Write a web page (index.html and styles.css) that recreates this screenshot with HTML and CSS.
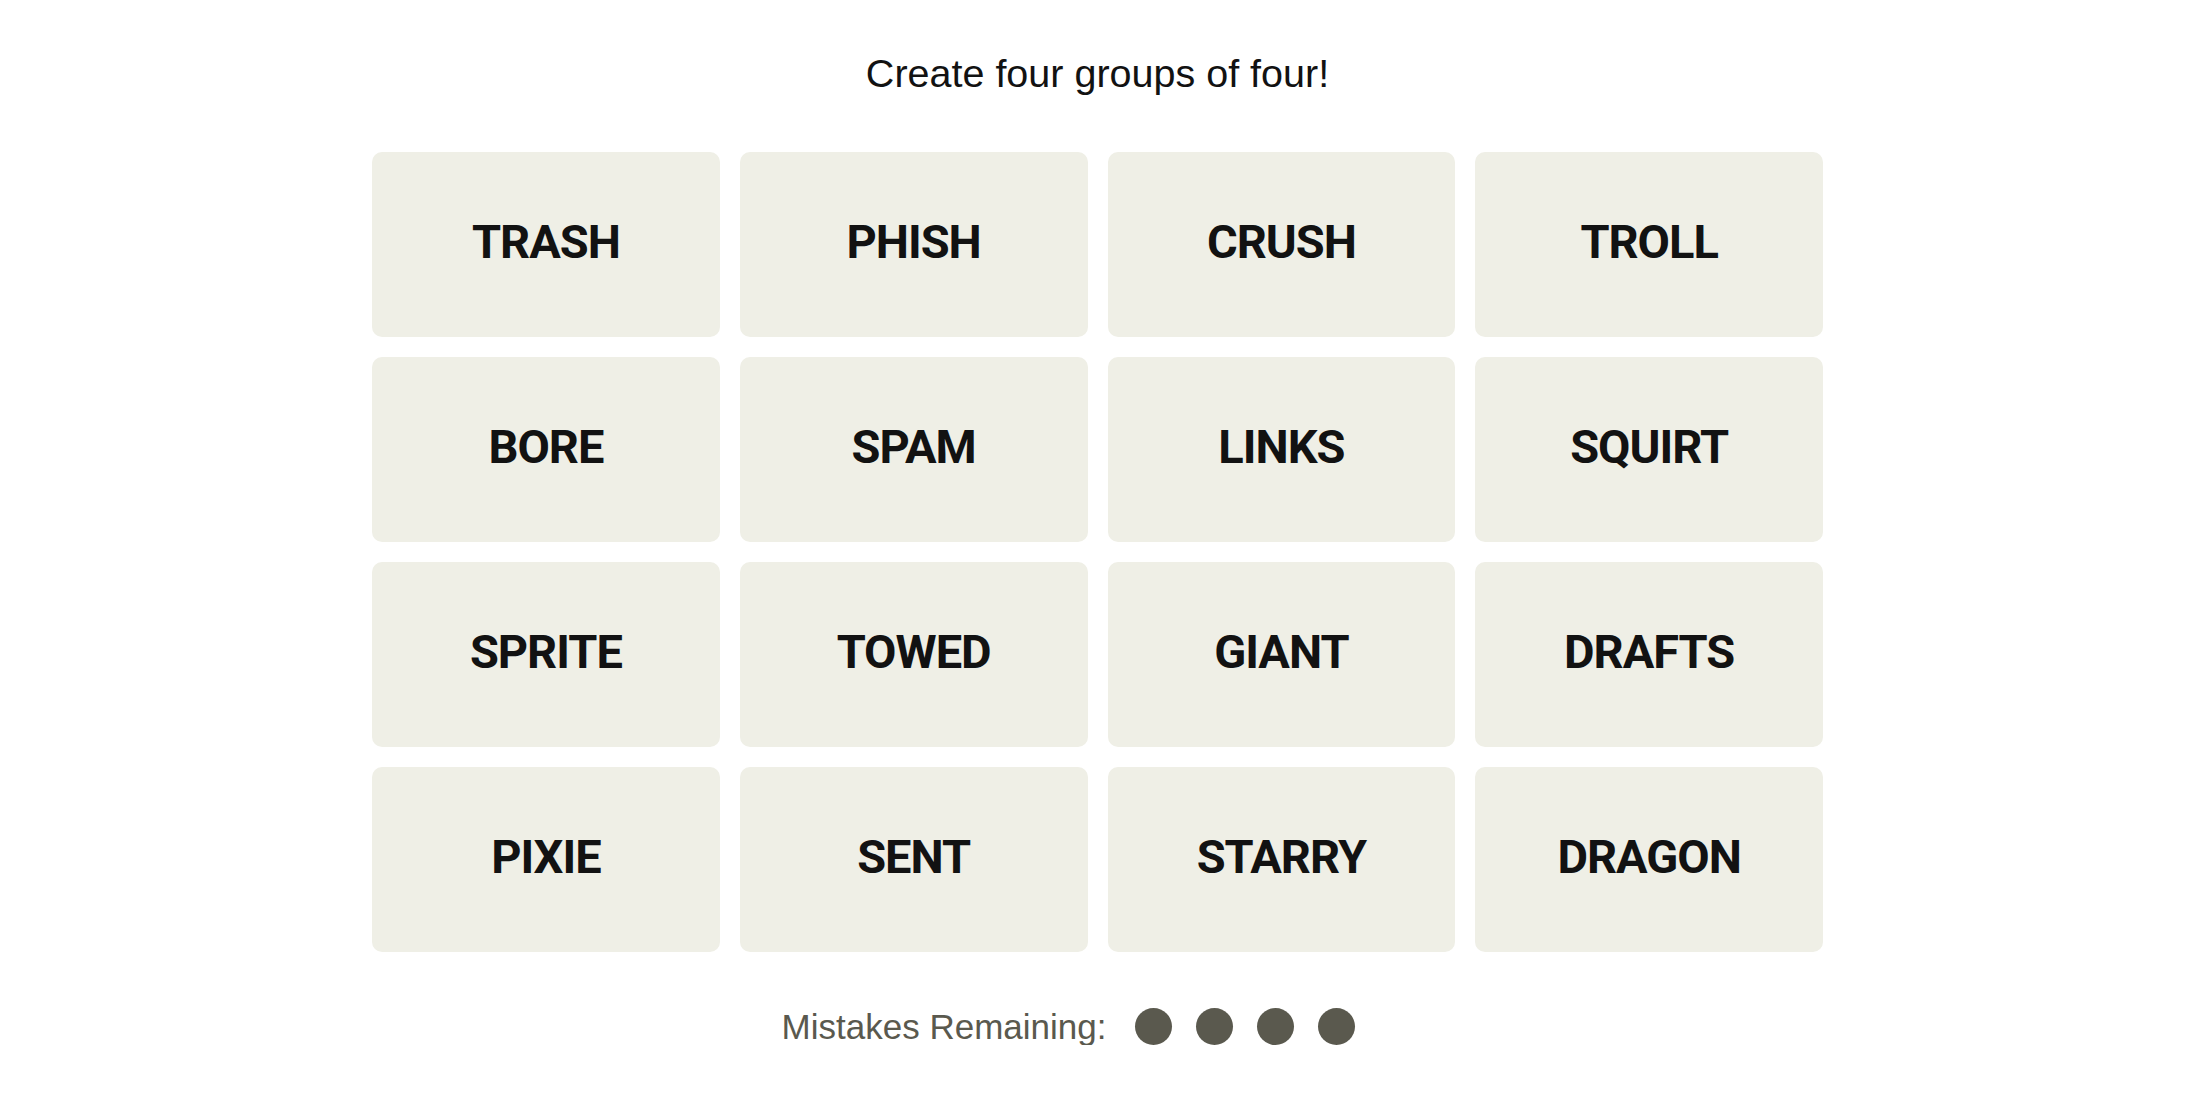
FILE: index.html
```html
<!DOCTYPE html>
<html lang="en">
<head>
<meta charset="utf-8">
<title>Connections</title>
<link rel="stylesheet" href="styles.css">
</head>
<body>
<main class="page">
  <p class="title">Create four groups of four!</p>
  <div class="board">
    <div class="tile">TRASH</div>
    <div class="tile">PHISH</div>
    <div class="tile">CRUSH</div>
    <div class="tile">TROLL</div>
    <div class="tile">BORE</div>
    <div class="tile">SPAM</div>
    <div class="tile">LINKS</div>
    <div class="tile">SQUIRT</div>
    <div class="tile">SPRITE</div>
    <div class="tile">TOWED</div>
    <div class="tile">GIANT</div>
    <div class="tile">DRAFTS</div>
    <div class="tile">PIXIE</div>
    <div class="tile">SENT</div>
    <div class="tile">STARRY</div>
    <div class="tile">DRAGON</div>
  </div>
  <div class="mistakes">
    <span class="mistakes-label">Mistakes Remaining:</span>
    <span class="dots">
      <span class="dot"></span>
      <span class="dot"></span>
      <span class="dot"></span>
      <span class="dot"></span>
    </span>
  </div>
</main>
</body>
</html>
```

FILE: styles.css
```css
html, body {
  margin: 0;
  padding: 0;
  background: #ffffff;
}

body {
  font-family: "Liberation Sans", Arial, sans-serif;
  color: #000000;
}

.page {
  width: 2195px;
  display: flex;
  flex-direction: column;
  align-items: center;
}

.title {
  margin: 53px 0 0 0;
  font-size: 39.5px;
  line-height: 40px;
  font-weight: 400;
  color: #121212;
}

.board {
  margin-top: 59px;
  width: 1451px;
  display: grid;
  grid-template-columns: repeat(4, 1fr);
  grid-auto-rows: 185px;
  gap: 20px;
}

.tile {
  background: #efefe6;
  border-radius: 10px;
  display: flex;
  align-items: center;
  justify-content: center;
  padding-bottom: 6px;
  box-sizing: border-box;
  font-family: Roboto, "Liberation Sans", sans-serif;
  font-weight: 700;
  font-size: 47px;
  letter-spacing: -1px;
  color: #121212;
}

.mistakes {
  margin-top: 56px;
  display: flex;
  align-items: center;
  gap: 29px;
  padding-right: 58px;
}

.mistakes-label {
  font-size: 35px;
  line-height: 37px;
  color: #5a594e;
}

.dots {
  display: flex;
  gap: 24px;
}

.dot {
  width: 37px;
  height: 37px;
  border-radius: 50%;
  background: #5a594e;
}
```
